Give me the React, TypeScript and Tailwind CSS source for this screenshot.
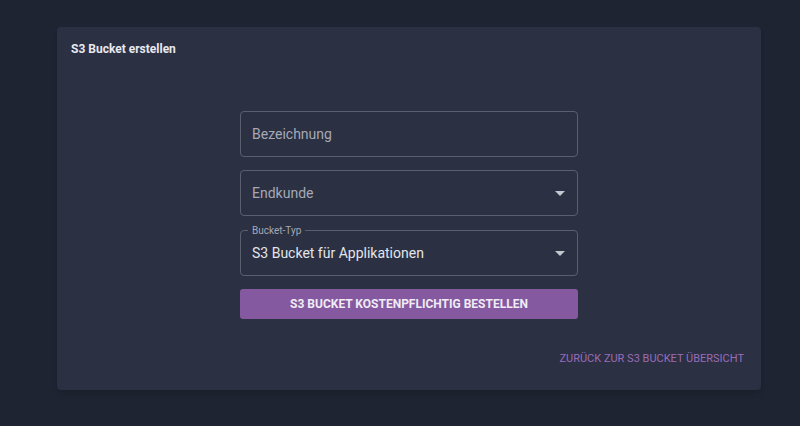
export default function App() {
  const caret = (
    <svg width="10" height="5" viewBox="0 0 10 5" className="text-[#c4c7d0]"><path d="M0 0 L10 0 L5 5 Z" fill="currentColor" /></svg>
  );
  return (
    <div className="w-[800px] h-[426px] bg-[#1f2432] pt-[27px] pl-[57px]" style={{ fontFamily: "Roboto, sans-serif" }}>
      <div className="w-[704px] h-[363px] bg-[#2b3043] rounded-[4px] shadow-md pt-[40px] relative">
        <div className="absolute left-[14px] top-[13px] text-[12px] font-bold text-[#e8e9ee]">S3 Bucket erstellen</div>
        <div className="ml-[183px] w-[338px] flex flex-col pt-[44px]">
          <div className="h-[46px] border border-[#5a5f70] rounded-[4px] flex items-center px-[11px] text-[14px] text-[#a6a9b5]">Bezeichnung</div>
          <div className="mt-[13px] h-[46px] border border-[#5a5f70] rounded-[4px] flex items-center justify-between px-[11px] pr-[12px] text-[14px] text-[#a6a9b5]">Endkunde{caret}</div>
          <div className="mt-[14px] h-[46px] border border-[#5a5f70] rounded-[4px] flex items-center justify-between px-[11px] pr-[12px] text-[14px] text-[#e4e5ea] relative">
            <span className="absolute left-[7px] -top-[8px] px-[4px] bg-[#2b3043] text-[10px] text-[#a6a9b5]">Bucket-Typ</span>
            S3 Bucket für Applikationen{caret}
          </div>
          <div className="mt-[13px] h-[30px] bg-[#8459a0] rounded-[3px] flex items-center justify-center text-[12px] font-bold text-[#f0ebf4]">S3 BUCKET KOSTENPFLICHTIG BESTELLEN</div>
        </div>
        <div className="absolute right-[17px] top-[324px] text-[11px] text-[#9b6cb8]">ZURÜCK ZUR S3 BUCKET ÜBERSICHT</div>
      </div>
    </div>
  );
}
